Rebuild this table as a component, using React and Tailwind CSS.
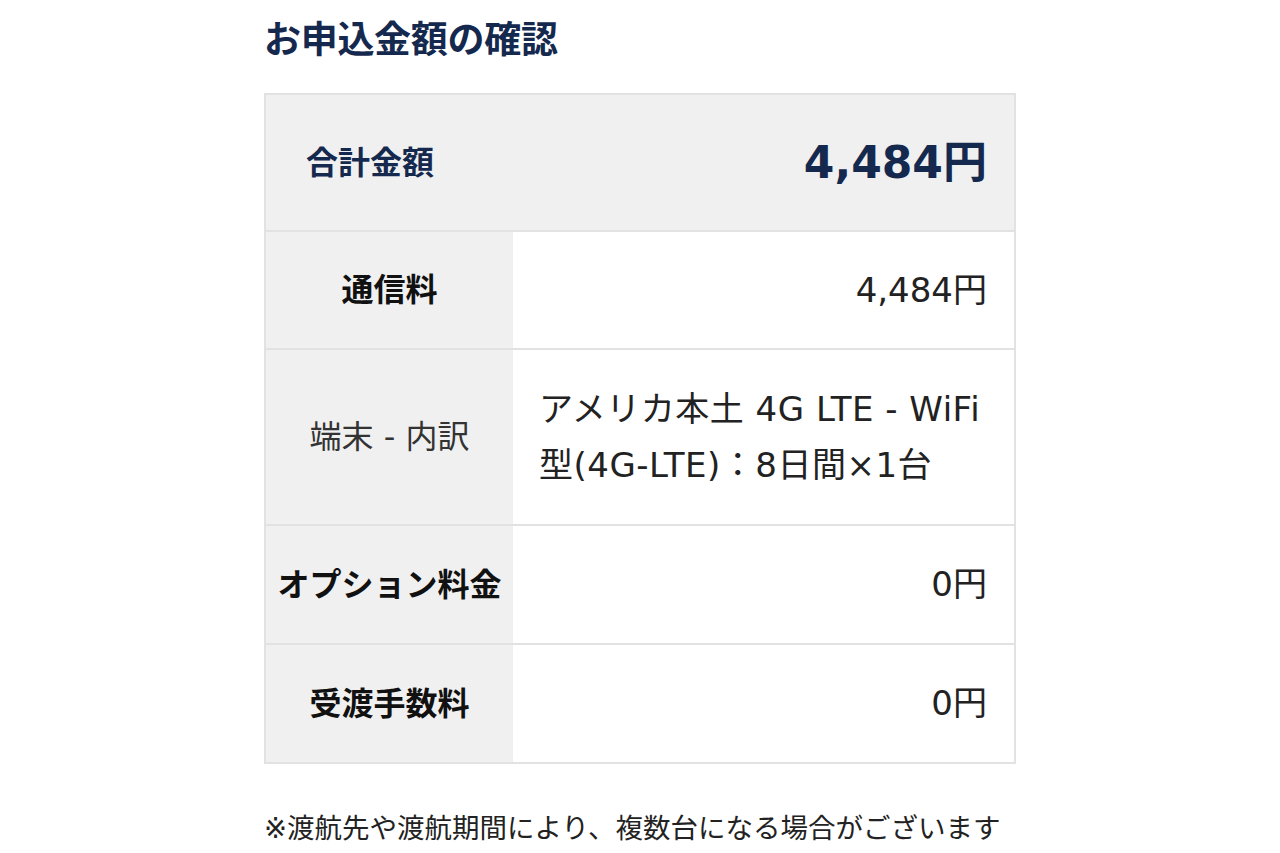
import React from "react";

const FONT = { fontFamily: '"DejaVu Sans", "Noto Sans CJK JP", sans-serif' };

const rows = [
  { label: "通信料", value: "4,484円", h: "h-[118px]" },
  {
    label: "端末 - 内訳",
    light: true,
    detail: ["アメリカ本土 4G LTE - WiFi", "型(4G-LTE)：8日間×1台"],
    h: "h-[176px]",
  },
  { label: "オプション料金", value: "0円", h: "h-[119px]" },
  { label: "受渡手数料", value: "0円", h: "h-[119px]" },
];

export default function App() {
  return (
    <div className="min-h-screen bg-white" style={FONT}>
      <div className="w-[752px] ml-[264px] pt-[14px]">
        {/* Title */}
        <h1 className="text-[37px] leading-[54px] font-bold text-[#15294f] tracking-[-0.3px]">
          お申込金額の確認
        </h1>

        {/* Summary table */}
        <div className="mt-[25px] border-2 border-[#e2e2e2]">
          <div className="h-[135px] bg-[#f0f0f0] flex items-center justify-between pl-[40px] pr-[27px]">
            <span className="text-[32px] font-bold text-[#15294f]">合計金額</span>
            <span className="text-[44px] font-bold text-[#15294f]">4,484円</span>
          </div>

          {rows.map((row) => (
            <div key={row.label} className={`flex border-t-2 border-[#e2e2e2] ${row.h}`}>
              <div className="w-[247px] shrink-0 bg-[#f0f0f0] flex items-center justify-center">
                <span
                  className={
                    row.light
                      ? "text-[32px] text-[#333333]"
                      : "text-[32px] font-bold text-[#111111]"
                  }
                >
                  {row.label}
                </span>
              </div>
              <div className="flex-1 bg-white flex items-center justify-end pr-[27px]">
                {row.detail ? (
                  <div className="w-full pl-[26px] text-[34px] leading-[56px] tracking-[0.5px] text-[#222222]">
                    {row.detail.map((line) => (
                      <div key={line}>{line}</div>
                    ))}
                  </div>
                ) : (
                  <span className="text-[34px] text-[#222222]">{row.value}</span>
                )}
              </div>
            </div>
          ))}
        </div>

        {/* Note */}
        <p className="mt-[44px] text-[27.5px] leading-[40px] text-[#222222] whitespace-nowrap">
          ※渡航先や渡航期間により、複数台になる場合がございます
        </p>
      </div>
    </div>
  );
}
